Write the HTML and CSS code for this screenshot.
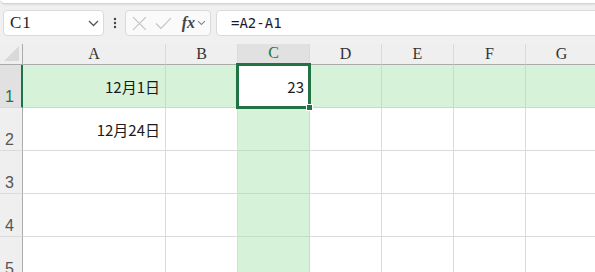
FILE: index.html
```html
<!DOCTYPE html>
<html lang="zh-CN">
<head>
    <meta charset="UTF-8">
    <title>Sheet</title>
    <link rel="stylesheet" href="styles.css">
</head>
<body>
    <div class="ribbon-edge"></div>
    <div class="formula-bar">
        <div class="name-box">
            <span class="cell-ref">C1</span>
            <svg width="11" height="7" viewBox="0 0 11 7"><path d="M1 1 L5.5 5.5 L10 1" fill="none" stroke="#555" stroke-width="1.3"/></svg>
        </div>
        <div class="bar-dots">
            <svg width="4" height="12" viewBox="0 0 4 12"><circle cx="2" cy="2" r="1.2" fill="#444"/><circle cx="2" cy="6" r="1.2" fill="#444"/><circle cx="2" cy="10" r="1.2" fill="#444"/></svg>
        </div>
        <div class="bar-buttons">
            <svg width="15" height="15" viewBox="0 0 15 15"><path d="M1 1 L14 14 M14 1 L1 14" stroke="#c4c4c4" stroke-width="1.2"/></svg>
            <svg width="17" height="13" viewBox="0 0 17 13"><path d="M1 6.5 L6 11.5 L16 1" fill="none" stroke="#c4c4c4" stroke-width="1.2"/></svg>
            <span class="fx">fx</span>
            <svg width="9" height="6" viewBox="0 0 9 6"><path d="M1 1 L4.5 4.5 L8 1" fill="none" stroke="#888" stroke-width="1.1"/></svg>
        </div>
        <div class="formula-input">=A2-A1</div>
    </div>

    <div class="sheet">
        <div class="corner"><div class="corner-tri"></div></div>
        <div class="col-head">A</div>
        <div class="col-head">B</div>
        <div class="col-head active">C</div>
        <div class="col-head">D</div>
        <div class="col-head">E</div>
        <div class="col-head">F</div>
        <div class="col-head">G</div>

        <div class="row-head active">1</div>
        <div class="cell hl num">12月1日</div>
        <div class="cell hl"></div>
        <div class="cell selected num">23</div>
        <div class="cell hl"></div>
        <div class="cell hl"></div>
        <div class="cell hl"></div>
        <div class="cell hl"></div>

        <div class="row-head">2</div>
        <div class="cell num">12月24日</div>
        <div class="cell"></div>
        <div class="cell hl"></div>
        <div class="cell"></div>
        <div class="cell"></div>
        <div class="cell"></div>
        <div class="cell"></div>

        <div class="row-head">3</div>
        <div class="cell"></div>
        <div class="cell"></div>
        <div class="cell hl"></div>
        <div class="cell"></div>
        <div class="cell"></div>
        <div class="cell"></div>
        <div class="cell"></div>

        <div class="row-head">4</div>
        <div class="cell"></div>
        <div class="cell"></div>
        <div class="cell hl"></div>
        <div class="cell"></div>
        <div class="cell"></div>
        <div class="cell"></div>
        <div class="cell"></div>

        <div class="row-head">5</div>
        <div class="cell"></div>
        <div class="cell"></div>
        <div class="cell hl"></div>
        <div class="cell"></div>
        <div class="cell"></div>
        <div class="cell"></div>
        <div class="cell"></div>
    </div>
</body>
</html>
```

FILE: styles.css
```css
body, html {
    margin: 0;
    padding: 0;
    height: 100%;
    overflow: hidden;
    background-color: #f0f0f0;
    font-family: "Noto Sans CJK SC", "Noto Sans", sans-serif;
}
.ribbon-edge {
    height: 3px;
    margin: 0 0 0 1px;
    background-color: #ffffff;
    border-bottom: 1px solid #d4d4d4;
    border-bottom-left-radius: 5px;
    box-shadow: 0 1px 2px rgba(0, 0, 0, 0.08);
}
.formula-bar {
    display: flex;
    align-items: center;
    height: 26px;
    margin-top: 6px;
    padding-left: 3px;
}
.name-box {
    display: flex;
    align-items: center;
    justify-content: space-between;
    width: 101px;
    height: 26px;
    box-sizing: border-box;
    padding: 0 4px 0 6px;
    background-color: #ffffff;
    border: 1px solid #dadada;
    border-radius: 4px;
}
.cell-ref {
    font-family: "Liberation Serif", serif;
    font-size: 17px;
    letter-spacing: 1px;
    color: #222;
}
.bar-dots {
    display: flex;
    width: 21px;
    justify-content: center;
}
.bar-buttons {
    display: flex;
    align-items: center;
    width: 86px;
    height: 26px;
    box-sizing: border-box;
    padding: 0 4px 0 6px;
    background-color: #fafafa;
    border: 1px solid #dadada;
    border-radius: 4px;
}
.bar-buttons svg:nth-child(2) {
    margin-left: 8px;
}
.fx {
    margin-left: 10px;
    margin-right: 2px;
    font-family: "Liberation Serif", serif;
    font-style: italic;
    font-weight: bold;
    font-size: 16px;
    color: #444;
}
.formula-input {
    flex: 1;
    height: 26px;
    margin-left: 5px;
    margin-right: -6px;
    box-sizing: border-box;
    padding: 2px 0 0 14px;
    background-color: #ffffff;
    border: 1px solid #dadada;
    border-radius: 4px;
    font-family: "DejaVu Sans Mono", monospace;
    font-size: 14px;
    line-height: 20px;
    color: #1a1a2e;
}
.sheet {
    display: grid;
    grid-template-columns: 23px 143px 72px 72px 72px 72px 72px 72px;
    grid-template-rows: 21px 43px 43px 43px 43px 43px;
    margin-top: 8px;
    background-color: #ffffff;
}
.corner {
    position: relative;
    background-color: #efefef;
    border-right: 1px solid #ababab;
    border-bottom: 1px solid #ababab;
}
.corner-tri {
    position: absolute;
    right: 3px;
    bottom: 3px;
    width: 0;
    height: 0;
    border-left: 15px solid transparent;
    border-bottom: 15px solid #d9d9d9;
}
.col-head {
    display: flex;
    justify-content: center;
    align-items: flex-end;
    padding-bottom: 1px;
    background-color: #efefef;
    border-right: 1px solid #dadada;
    border-bottom: 1px solid #ababab;
    font-family: "Liberation Serif", serif;
    font-size: 16px;
    color: #333;
}
.col-head.active {
    background-color: #e1e1e1;
    color: #217346;
    border-bottom: 2px solid #217346;
}
.row-head {
    display: flex;
    align-items: flex-end;
    padding: 0 0 1px 5px;
    background-color: #efefef;
    border-right: 1px solid #ababab;
    border-bottom: 1px solid #dadada;
    font-family: "Liberation Sans", sans-serif;
    font-size: 16px;
    color: #555;
}
.row-head.active {
    background-color: #e1e1e1;
    color: #217346;
    border-right: 2px solid #217346;
}
.cell {
    display: flex;
    align-items: center;
    justify-content: flex-end;
    padding-right: 5px;
    border-right: 1px solid #dadada;
    border-bottom: 1px solid #dadada;
    font-size: 15px;
    color: #1a1a1a;
}
.cell.hl {
    background-color: #d6f3d9;
    border-color: #c2dfc6;
}
.cell.selected {
    position: relative;
    background-color: #ffffff;
}
.cell.selected::after {
    content: "";
    position: absolute;
    left: -2px;
    top: -2px;
    right: -2px;
    bottom: -2px;
    border: 3px solid #217346;
}
.cell.selected::before {
    content: "";
    position: absolute;
    right: -4px;
    bottom: -4px;
    width: 5px;
    height: 5px;
    background-color: #217346;
    border: 1px solid #ffffff;
    z-index: 2;
}
```
